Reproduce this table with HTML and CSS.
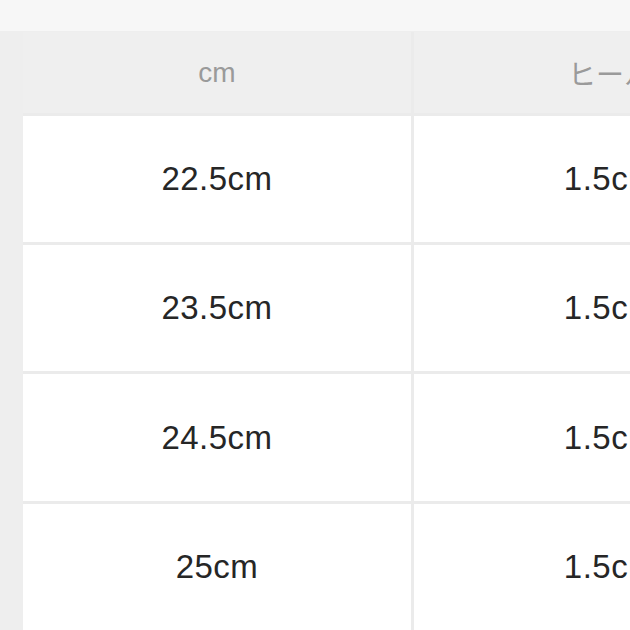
FILE: index.html
```html
<!DOCTYPE html>
<html lang="ja">
<head>
<meta charset="utf-8">
<link rel="stylesheet" href="styles.css">
</head>
<body>
<div class="top"></div>
<div class="main">
  <div class="table">
    <div class="cell head">cm</div>
    <div class="cell head">ヒール</div>
    <div class="cell">22.5cm</div>
    <div class="cell">1.5cm</div>
    <div class="cell">23.5cm</div>
    <div class="cell">1.5cm</div>
    <div class="cell">24.5cm</div>
    <div class="cell">1.5cm</div>
    <div class="cell">25cm</div>
    <div class="cell">1.5cm</div>
  </div>
</div>
</body>
</html>
```
FILE: styles.css
```css
html, body {
  margin: 0;
  padding: 0;
  width: 630px;
  height: 630px;
  overflow: hidden;
  background: #eeeeee;
  font-family: "Liberation Sans", Arial, "Noto Sans CJK JP", sans-serif;
}
.top {
  height: 31px;
  background: #f7f7f7;
}
.main {
  padding: 1px 0 0 23px;
  background: #eeeeee;
}
.table {
  display: grid;
  grid-template-columns: 388px 392px;
  grid-template-rows: 81px 126px 126px 127px 126px;
  column-gap: 3px;
  row-gap: 3px;
  width: 783px;
  background: #ebebeb;
}
.cell {
  display: flex;
  align-items: center;
  justify-content: center;
  background: #ffffff;
  color: #262626;
  font-size: 33px;
  letter-spacing: 0.5px;
}
.head {
  background: #efefef;
  color: #9a9a9a;
  font-size: 28px;
  letter-spacing: 0;
}
```
